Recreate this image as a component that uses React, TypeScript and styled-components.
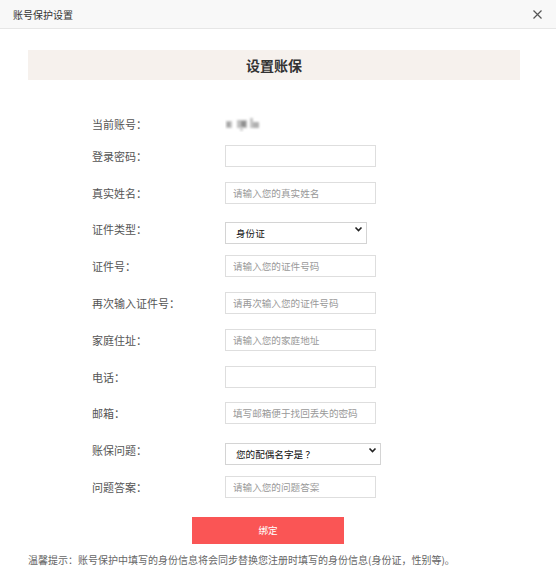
import React from 'react';
import styled, { createGlobalStyle } from 'styled-components';

const GlobalStyle = createGlobalStyle`
body {
    margin: 0;
    background: #fff;
    font-family: "Noto Sans CJK SC", "Liberation Sans", sans-serif;
}
`

const Dialog = styled.div`
width: 556px;
height: 580px;
background: #fff;
overflow: hidden;
`

const Header = styled.div`
height: 28px;
display: flex;
align-items: center;
justify-content: space-between;
padding: 0 14px 0 13px;
background: #f8f8f8;
border-bottom: 1px solid #e6e6e6;
`

const HeaderTitle = styled.span`
font-size: 10px;
color: #333;
`

const Close = styled.button`
border: none;
background: none;
padding: 0;
width: 9px;
height: 9px;
display: grid;
cursor: pointer;
`

const Body = styled.div`
padding: 21px 36px 0 28px;
`

const Banner = styled.div`
height: 30px;
display: flex;
align-items: center;
justify-content: center;
background: #f6f1ed;
font-size: 14px;
font-weight: bold;
color: #333;
`

const Form = styled.div`
margin-top: 38px;
padding-left: 64px;
`

const Row = styled.div`
display: flex;
align-items: center;
margin-bottom: 14.8px;
`

const Label = styled.label`
width: 133px;
font-size: 11px;
line-height: 12px;
color: #555;
`

const Input = styled.input`
box-sizing: border-box;
width: 151px;
height: 22px;
border: 1px solid #dedede;
padding: 0 7px;
margin: 0;
font-family: inherit;
font-size: 9.6px;
color: #333;
outline: none;

&::placeholder {
    color: #999;
}
`

const SelectWrap = styled.div<{ $width: number }>`
position: relative;
width: ${p => p.$width}px;
height: 22px;
`

const Select = styled.select<{ $indent: number }>`
appearance: none;
box-sizing: border-box;
width: 100%;
height: 100%;
border: 1px solid #d4d4d4;
border-radius: 0;
background: #fff;
padding: 0 0 0 ${p => p.$indent}px;
margin: 0;
font-family: inherit;
font-size: 9.6px;
color: #111;
outline: none;
`

const Chevron = styled.svg`
position: absolute;
right: 4px;
top: 8px;
pointer-events: none;
`

const Account = styled.svg`
display: block;
margin-top: -2px;
margin-bottom: -2px;
`

const Submit = styled.button`
display: block;
width: 152px;
height: 27px;
margin: 19px 0 0 164px;
border: none;
background: #fa5555;
color: #fff;
font-family: inherit;
font-size: 9.6px;
cursor: pointer;
`

const Note = styled.p`
margin: 9px 0 0;
font-size: 10px;
line-height: 14px;
color: #666;
white-space: nowrap;
`

const fields: { label: string; placeholder?: string }[] = [
    { label: '证件号：', placeholder: '请输入您的证件号码' },
    { label: '再次输入证件号：', placeholder: '请再次输入您的证件号码' },
    { label: '家庭住址：', placeholder: '请输入您的家庭地址' },
    { label: '电话：' },
    { label: '邮箱：', placeholder: '填写邮箱便于找回丢失的密码' },
]

const ChevronIcon = () => (
    <Chevron width="9" height="6" viewBox="0 0 9 6">
        <polyline points="1.5,1.5 4.5,4.5 7.5,1.5" fill="none" stroke="#222" strokeWidth="1.6" />
    </Chevron>
)

export default function App() {
    return (
        <Dialog>
            <GlobalStyle />
            <Header>
                <HeaderTitle>账号保护设置</HeaderTitle>
                <Close aria-label="close">
                    <svg width="9" height="9" viewBox="0 0 9 9">
                        <path d="M0.5 0.5L8.5 8.5M8.5 0.5L0.5 8.5" stroke="#555" strokeWidth="1.2" />
                    </svg>
                </Close>
            </Header>
            <Body>
                <Banner>设置账保</Banner>
                <Form>
                    <Row>
                        <Label>当前账号：</Label>
                        {/* blurred account name */}
                        <Account width="36" height="16" viewBox="0 0 36 16">
                            <defs>
                                <filter id="blur" x="-30%" y="-30%" width="160%" height="160%">
                                    <feGaussianBlur stdDeviation="1" />
                                </filter>
                            </defs>
                            <g filter="url(#blur)">
                                <rect x="1" y="5" width="6" height="7" fill="#c4c4c4" />
                                <rect x="2" y="6" width="3" height="5" fill="#a0a0a0" />
                                <rect x="12" y="4" width="10" height="8" fill="#c0c0c0" />
                                <rect x="16" y="5" width="5" height="6" fill="#8f8f8f" />
                                <rect x="15" y="11" width="3" height="4" fill="#d4d4d4" />
                                <rect x="25" y="2" width="3" height="10" fill="#c4c4c4" />
                                <rect x="28" y="6" width="6" height="6" fill="#b0b0b0" />
                            </g>
                        </Account>
                    </Row>
                    <Row>
                        <Label>登录密码：</Label>
                        <Input type="password" />
                    </Row>
                    <Row>
                        <Label>真实姓名：</Label>
                        <Input placeholder="请输入您的真实姓名" />
                    </Row>
                    <Row>
                        <Label>证件类型：</Label>
                        <SelectWrap $width={142}>
                            <Select $indent={10} defaultValue="id">
                                <option value="id">身份证</option>
                                <option value="passport">护照</option>
                            </Select>
                            <ChevronIcon />
                        </SelectWrap>
                    </Row>
                    {fields.map(f => (
                        <Row key={f.label}>
                            <Label>{f.label}</Label>
                            <Input placeholder={f.placeholder} />
                        </Row>
                    ))}
                    <Row>
                        <Label>账保问题：</Label>
                        <SelectWrap $width={156}>
                            <Select $indent={10} defaultValue="q1">
                                <option value="q1">您的配偶名字是 ？</option>
                                <option value="q2">您的出生地是 ？</option>
                            </Select>
                            <ChevronIcon />
                        </SelectWrap>
                    </Row>
                    <Row>
                        <Label>问题答案：</Label>
                        <Input placeholder="请输入您的问题答案" />
                    </Row>
                </Form>
                <Submit>绑定</Submit>
                <Note>温馨提示：账号保护中填写的身份信息将会同步替换您注册时填写的身份信息(身份证，性别等)。</Note>
            </Body>
        </Dialog>
    )
}
